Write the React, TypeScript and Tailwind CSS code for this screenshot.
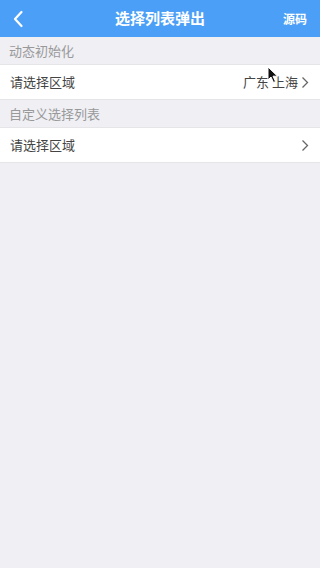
import React from "react";

const Chevron: React.FC = () => (
  <svg width="8" height="13" viewBox="0 0 8 13" className="ml-[3px]">
    <path d="M1.5 1.5 L6.5 6.5 L1.5 11.5" fill="none" stroke="#666" strokeWidth="1.3" />
  </svg>
);

const Row: React.FC<{ label: string; value?: string }> = ({ label, value }) => (
  <div className="flex h-[36px] items-center justify-between border-y border-[#e5e5e8] bg-white pl-[10px] pr-[11px] text-[13px] text-[#444]">
    <span>{label}</span>
    <div className="flex items-center">
      {value && <span>{value}</span>}
      <Chevron />
    </div>
  </div>
);

const SectionTitle: React.FC<{ text: string }> = ({ text }) => (
  <div className="flex h-[27px] items-center pl-[9px] text-[13px] text-[#999]">{text}</div>
);

const App: React.FC = () => {
  return (
    <div
      className="relative min-h-[568px] w-[320px] bg-[#efeff4]"
      style={{ fontFamily: '"Noto Sans CJK SC", "Noto Sans", sans-serif' }}
    >
      <header className="relative flex h-[37px] items-center justify-center bg-[#4c9ff6] text-white">
        <svg width="12" height="18" viewBox="0 0 12 18" className="absolute left-[12px] top-[10px]">
          <path d="M9.5 2 L3 9 L9.5 16" fill="none" stroke="#fff" strokeWidth="2.2" strokeLinecap="round" strokeLinejoin="round" />
        </svg>
        <h1 className="text-[15px] font-bold">选择列表弹出</h1>
        <span className="absolute right-[13px] text-[12px] font-bold">源码</span>
      </header>

      <SectionTitle text="动态初始化" />
      <Row label="请选择区域" value="广东 上海" />
      <SectionTitle text="自定义选择列表" />
      <Row label="请选择区域" />

      {/* mouse cursor overlay */}
      <svg width="12" height="18" viewBox="0 0 12 18" className="absolute left-[267px] top-[66px]">
        <path d="M1 1 L1 14 L4 11 L6.5 16.5 L8.5 15.5 L6 10.2 L10.5 10.2 Z" fill="#111" stroke="#fff" strokeWidth="1" />
      </svg>
    </div>
  );
};

export default App;
